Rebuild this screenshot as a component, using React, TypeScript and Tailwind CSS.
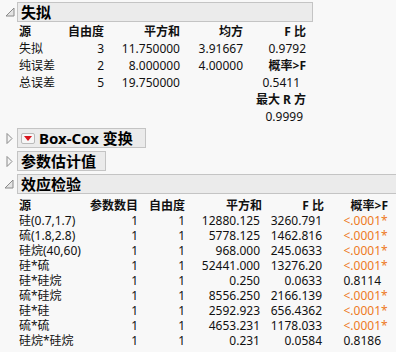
import React from "react";

const ORANGE = "text-[#ee7a1e]";

function OpenTri() {
  return (
    <svg width="10" height="10" viewBox="0 0 10 10" className="block">
      <polygon points="1,9 9,1 9,9" fill="#e4e4e4" stroke="#8a8a8a" strokeWidth="1" />
    </svg>
  );
}

function ClosedTri() {
  return (
    <svg width="7" height="11" viewBox="0 0 7 11" className="block">
      <polygon points="1,0.5 6,5.5 1,10.5" fill="#f4f4f4" stroke="#8a8a8a" strokeWidth="1" />
    </svg>
  );
}

function RedMenu() {
  return (
    <span className="flex h-[11px] w-[14px] items-center justify-center rounded-[2px] border border-[#b9b9b9] bg-[#f6f6f6]">
      <svg width="8" height="5" viewBox="0 0 8 5" className="block">
        <polygon points="0,0 8,0 4,5" fill="#d8141c" />
      </svg>
    </span>
  );
}

function Header({
  open,
  width,
  children,
}: {
  open: boolean;
  width: string;
  children: React.ReactNode;
}) {
  return (
    <div className="flex h-[20px] items-center">
      <div className="flex w-[17px] items-center justify-center pl-[2px]">
        {open ? <OpenTri /> : <ClosedTri />}
      </div>
      <div
        className={`flex h-[20px] ${width} items-center gap-[3px] border border-[#c4c4c4] bg-[#ebebeb] pl-[3px] text-[15px] font-bold leading-none text-black`}
      >
        {children}
      </div>
    </div>
  );
}

const lof = [
  ["失拟", "3", "11.750000", "3.91667", "0.9792"],
  ["纯误差", "2", "8.000000", "4.00000", ""],
  ["总误差", "5", "19.750000", "", ""],
];

const effects: [string, string, string, string, string, string, boolean][] = [
  ["硅(0.7,1.7)", "1", "1", "12880.125", "3260.791", "<.0001", true],
  ["硫(1.8,2.8)", "1", "1", "5778.125", "1462.816", "<.0001", true],
  ["硅烷(40,60)", "1", "1", "968.000", "245.0633", "<.0001", true],
  ["硅*硫", "1", "1", "52441.000", "13276.20", "<.0001", true],
  ["硅*硅烷", "1", "1", "0.250", "0.0633", "0.8114", false],
  ["硫*硅烷", "1", "1", "8556.250", "2166.139", "<.0001", true],
  ["硅*硅", "1", "1", "2592.923", "656.4362", "<.0001", true],
  ["硫*硫", "1", "1", "4653.231", "1178.033", "<.0001", true],
  ["硅烷*硅烷", "1", "1", "0.231", "0.0584", "0.8186", false],
];

export default function App() {
  return (
    <div
      className="h-[352px] w-[396px] overflow-hidden bg-[#f8f8f8] pt-[2px] text-[12px] text-[#111]"
      style={{ fontFamily: '"Noto Sans", "Noto Sans CJK SC", sans-serif' }}
    >
      <Header open width="w-[296px]">失拟</Header>

      <div className="mt-[1px] pl-[19px] leading-[17px]">
        <div className="flex h-[17px] items-center font-bold">
          <span className="w-[45px]">源</span>
          <span className="w-[40px] text-right">自由度</span>
          <span className="w-[76px] text-right">平方和</span>
          <span className="w-[63px] text-right">均方</span>
          <span className="w-[63px] text-right">F 比</span>
        </div>
        {lof.map((r, i) => (
          <div key={r[0]} className="flex h-[17px] items-center">
            <span className="w-[45px]">{r[0]}</span>
            <span className="w-[40px] text-right">{r[1]}</span>
            <span className="w-[76px] text-right">{r[2]}</span>
            <span className="w-[63px] text-right">{r[3]}</span>
            {i === 0 ? (
              <span className="w-[63px] text-right">{r[4]}</span>
            ) : i === 1 ? (
              <span className="w-[63px] text-right font-bold">概率&gt;F</span>
            ) : (
              <span className="w-[63px] pr-[6px] text-right">0.5411</span>
            )}
          </div>
        ))}
        <div className="flex h-[17px] items-center">
          <span className="w-[287px] text-right font-bold">最大 R 方</span>
        </div>
        <div className="flex h-[17px] items-center">
          <span className="w-[287px] pr-[3px] text-right">0.9999</span>
        </div>
      </div>

      <div className="mt-[3px] flex flex-col gap-[3px]">
        <Header open={false} width="w-[129px]">
          <RedMenu />
          <span className="pl-[1px]">Box-Cox 变换</span>
        </Header>
        <Header open={false} width="w-[89px]">参数估计值</Header>
        <Header open width="w-[380px] border-r-0">效应检验</Header>
      </div>

      <div className="mt-[4px] pl-[19px] leading-[15px]">
        <div className="flex h-[15px] items-center font-bold">
          <span className="w-[71px]">源</span>
          <span className="w-[48px] text-right">参数数目</span>
          <span className="w-[47px] text-right">自由度</span>
          <span className="w-[77px] text-right">平方和</span>
          <span className="w-[62px] text-right">F 比</span>
          <span className="w-[64px] text-right">概率&gt;F</span>
        </div>
        {effects.map((r) => (
          <div key={r[0]} className="flex h-[15px] items-center">
            <span className="w-[71px] whitespace-nowrap">{r[0]}</span>
            <span className="w-[48px] text-right">{r[1]}</span>
            <span className="w-[47px] text-right">{r[2]}</span>
            <span className="w-[75px] text-right">{r[3]}</span>
            <span className="w-[62px] text-right">{r[4]}</span>
            <span className={`flex w-[66px] justify-end ${r[6] ? ORANGE : ""}`}>
              <span>{r[5]}</span>
              <span className="w-[7px] text-left">{r[6] ? "*" : ""}</span>
            </span>
          </div>
        ))}
      </div>
    </div>
  );
}
